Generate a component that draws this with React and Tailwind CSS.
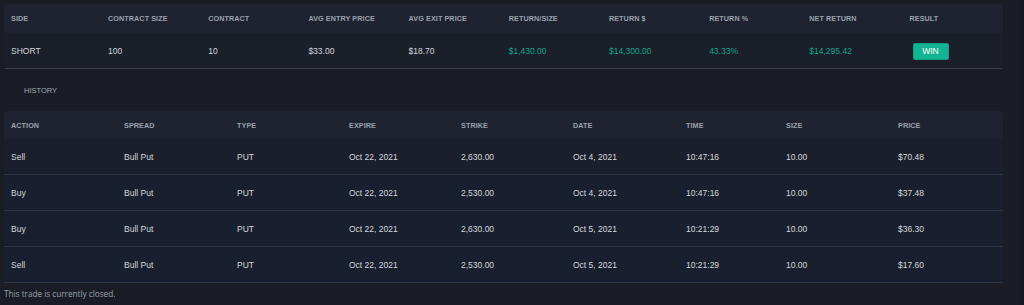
import React from "react";

const topHeaders = ["SIDE","CONTRACT SIZE","CONTRACT","AVG ENTRY PRICE","AVG EXIT PRICE","RETURN/SIZE","RETURN $","RETURN %","NET RETURN","RESULT"];
const topRow = ["SHORT","100","10","$33.00","$18.70","$1,430.00","$14,300.00","43.33%","$14,295.42"];
const greenIdx = [5,6,7,8];

const histHeaders = ["ACTION","SPREAD","TYPE","EXPIRE","STRIKE","DATE","TIME","SIZE","PRICE"];
const histWidths = ["w-[113px]","w-[113px]","w-[112px]","w-[112px]","w-[112px]","w-[113px]","w-[100px]","w-[112px]","w-[112px]"];
const histRows = [
  ["Sell","Bull Put","PUT","Oct 22, 2021","2,630.00","Oct 4, 2021","10:47:16","10.00","$70.48"],
  ["Buy","Bull Put","PUT","Oct 22, 2021","2,530.00","Oct 4, 2021","10:47:16","10.00","$37.48"],
  ["Buy","Bull Put","PUT","Oct 22, 2021","2,630.00","Oct 5, 2021","10:21:29","10.00","$36.30"],
  ["Sell","Bull Put","PUT","Oct 22, 2021","2,530.00","Oct 5, 2021","10:21:29","10.00","$17.60"],
];

export default function App() {
  return (
    <div className="flex h-[305px] w-[1024px] bg-[#1a1d26] font-['Liberation_Sans',Arial,sans-serif]">
      <div className="w-[1020px] pl-[4px] pt-[4px]">
        <div className="w-[999px]">
          <div className="overflow-hidden rounded-t-[4px]">
            <div className="flex h-[29px] items-center bg-[#1e232f] pt-[2px]">
              {topHeaders.map((h, i) => (
                <div key={h} className={`${i === 0 ? "w-[97px]" : "w-[100.2px]"} pl-[7px] text-[7.2px] font-bold tracking-[0.1px] text-[#9ba1ad]`}>{h}</div>
              ))}
            </div>
            <div className="flex h-[35px] items-center bg-[#1a1f2a] pt-[2px]">
              {topRow.map((v, i) => (
                <div key={i} className={`${i === 0 ? "w-[97px]" : "w-[100.2px]"} pl-[7px] text-[8.5px] ${greenIdx.includes(i) ? "text-[#10a58b]" : "text-[#d4d7dd]"}`}>{v}</div>
              ))}
              <div className="w-[100.2px] pl-[10px]">
                <div className="flex h-[17px] w-[36px] items-center justify-center rounded-[2px] border border-[#0f9b80] bg-[#13b493] text-[8.5px] text-white">WIN</div>
              </div>
            </div>
          </div>
          <div className="mx-[1px] h-px bg-[#3c414c]"></div>
          <div className="flex h-[42px] items-center pl-[20px] pt-[2px] text-[7.5px] text-[#a3a8b2]">HISTORY</div>
          <div className="overflow-hidden rounded-t-[4px]">
            <div className="flex h-[28px] items-center bg-[#1e232f] pt-[2px]">
              {histHeaders.map((h, i) => (
                <div key={h} className={`${histWidths[i]} pl-[7px] text-[7.2px] font-bold tracking-[0.1px] text-[#9ba1ad]`}>{h}</div>
              ))}
            </div>
            {histRows.map((r, ri) => (
              <div key={ri} className={`flex h-[36px] items-center border-b border-[#2f3541] pt-[2px] ${ri === 0 ? "bg-[#1a1f2b]" : "bg-[#18202f]"}`}>
                {r.map((v, i) => (
                  <div key={i} className={`${histWidths[i]} pl-[7px] text-[8.5px] text-[#d4d7dd]`}>{v}</div>
                ))}
              </div>
            ))}
          </div>
          <div className="pt-[5px] font-['Open_Sans',sans-serif] text-[8.2px] text-[#9ba1ad]">This trade is currently closed.</div>
        </div>
      </div>
      <div className="w-[4px] bg-[#16181f]"></div>
    </div>
  );
}
